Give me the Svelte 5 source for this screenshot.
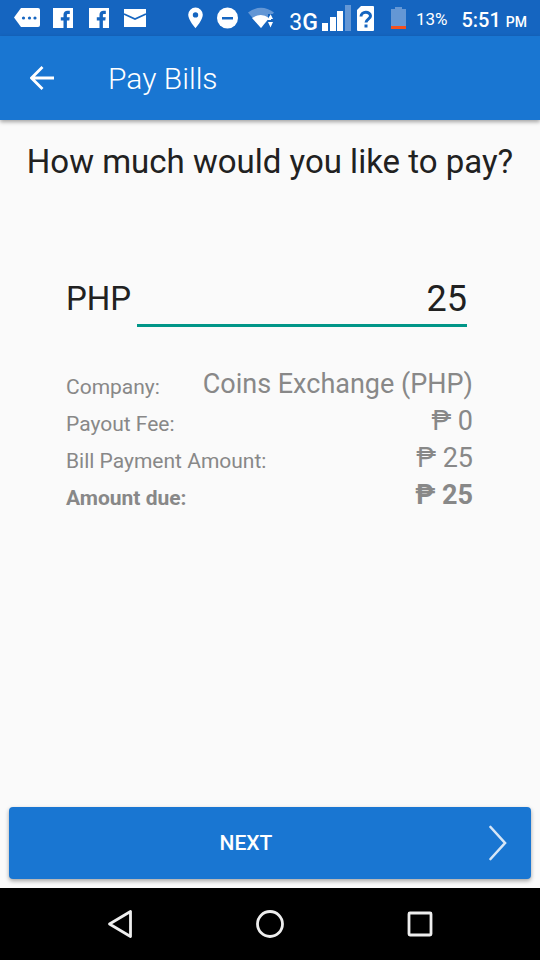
<script lang="ts">
	let amount = $state("25");

	const fee = 0;
	const total = $derived((Number(amount) || 0) + fee);

	const rows = $derived([
		{ label: "Company:", value: "Coins Exchange (PHP)", due: false },
		{ label: "Payout Fee:", value: `₱ ${fee}`, due: false },
		{ label: "Bill Payment Amount:", value: `₱ ${amount}`, due: false },
		{ label: "Amount due:", value: `₱ ${total}`, due: true },
	]);
</script>

<div class="screen">
	<div class="status">
		<div class="notifications">
			<svg viewBox="0 0 36 36" aria-hidden="true">
				<path d="M12 8h17q2 0 2 2v15q0 2-2 2H12L5 17.500z" fill="#fff" />
				<g fill="#1565c0">
					<circle cx="14.500" cy="18" r="1.600" />
					<circle cx="20.500" cy="18" r="1.600" />
					<circle cx="26" cy="18" r="1.600" />
				</g>
			</svg>
			{#each [1, 2] as id (id)}
				<svg viewBox="0 0 36 36" aria-hidden="true">
					<path d="M8 8h20v20H8z" fill="#fff" />
					<path
						d="M18.500 28v-7.500h-2.700v-3.300h2.700v-2.500c0-2.700 1.700-3.900 4-3.900h2.300v3.200h-1.600c-1 0-1.300.5-1.300 1.300v1.900h2.800l-.4 3.300h-2.400V28z"
						fill="#1565c0"
					/>
				</svg>
			{/each}
			<svg viewBox="0 0 36 36" aria-hidden="true">
				<path d="M7 9h22v18H7z" fill="#fff" />
				<path d="M7 14l11 5 11-5" fill="none" stroke="#1565c0" stroke-width="1.800" />
			</svg>
		</div>

		<div class="system">
			<div class="indicators">
				<svg viewBox="0 0 32 36" aria-hidden="true">
					<path
						fill="#fff"
						fill-rule="evenodd"
						d="M15.500 7.500a7.300 7.300 0 0 0-7.300 7.300c0 5.200 7.300 13.400 7.300 13.400s7.300-8.200 7.300-13.400a7.300 7.300 0 0 0-7.300-7.300zm0 4.700a2.700 2.700 0 1 1 0 5.400 2.700 2.700 0 0 1 0-5.400z"
					/>
				</svg>
				<svg viewBox="0 0 32 36" aria-hidden="true">
					<circle cx="15.500" cy="18" r="10.500" fill="#fff" />
					<path d="M10 17h11v2.500H10z" fill="#1565c0" />
				</svg>
				<svg viewBox="0 0 32 36" aria-hidden="true">
					<path d="M4 12.500Q17 3 30 12.500L17 28z" fill="#6497d5" />
					<path d="M8 18Q17 12 25 18L17 28z" fill="#fff" />
					<path d="M24 14h7v14h-6v-4l-1-2z" fill="#1565c0" />
					<path d="M27 14v6h-4zM24 22h5l-2.500 5.500zM27 15l2 4h-2z" fill="#fff" />
				</svg>
			</div>
			<span class="network">3<b>G</b></span>
			<svg class="signal" viewBox="0 0 29 36" aria-hidden="true">
				<path d="M0 23h6v8H0zM8 17h6v14H8zM15 11h6v20h-6z" fill="#fff" />
				<path d="M23 5h6v26h-6z" fill="#6497d5" />
			</svg>
			<svg class="sim" viewBox="0 0 17 36" aria-hidden="true">
				<path d="M4 6h12q1 0 1 1v23q0 1-1 1H1q-1 0-1-1V10z" fill="#fff" />
				<path
					d="M4 16.500c0-5.500 9.500-5.500 9.500-.5 0 3-4.500 3.300-4.500 6.500M9 24.500v3"
					fill="none"
					stroke="#1565c0"
					stroke-width="3"
				/>
			</svg>
			<svg class="battery" viewBox="0 0 15 36" aria-hidden="true">
				<path d="M4 7h7v2h4v17H0V9h4z" fill="#6497d5" />
				<path d="M0 26h15v3H0z" fill="#f4511e" />
			</svg>
			<span class="percent">13%</span>
			<span class="clock">5:51 <small>PM</small></span>
		</div>
	</div>

	<header>
		<button class="back" aria-label="Back">
			<svg viewBox="0 0 24 24" aria-hidden="true">
				<path d="M24 12H2M12.500 1L1.500 12l11 11" fill="none" stroke="#fff" stroke-width="2.800" />
			</svg>
		</button>
		<h1>Pay Bills</h1>
	</header>

	<main>
		<h2>How much would you like to pay?</h2>

		<div class="amount">
			<label for="amount">PHP</label>
			<input id="amount" type="text" inputmode="decimal" bind:value={amount} />
		</div>

		<dl>
			{#each rows as row (row.label)}
				<div class="row" class:due={row.due}>
					<dt>{row.label}</dt>
					<dd>{row.value}</dd>
				</div>
			{/each}
		</dl>

		<button class="next">
			<span>NEXT</span>
			<svg viewBox="0 0 18 36" aria-hidden="true">
				<path
					d="M1.500 2L16 18 1.500 34"
					fill="none"
					stroke="#d6e6f7"
					stroke-width="2.600"
					stroke-linecap="round"
				/>
			</svg>
		</button>
	</main>

	<nav>
		<button aria-label="Back">
			<svg viewBox="0 0 30 30" aria-hidden="true">
				<path d="M25.500 2.500v25L4.500 15z" />
			</svg>
		</button>
		<button aria-label="Home">
			<svg viewBox="0 0 30 30" aria-hidden="true">
				<circle cx="15" cy="15" r="12.500" />
			</svg>
		</button>
		<button aria-label="Recent apps">
			<svg viewBox="0 0 30 30" aria-hidden="true">
				<rect x="4" y="4" width="22" height="22" rx="1" />
			</svg>
		</button>
	</nav>
</div>

<style>
	:global(body) {
		margin: 0;
	}

	.screen {
		display: flex;
		flex-direction: column;
		min-height: 100vh;
		background: #fafafa;
		color: #212121;
		font-family: Roboto, "Liberation Sans", sans-serif;
	}

	button {
		padding: 0;
		border: 0;
		background: none;
		font-family: inherit;
		cursor: pointer;
	}

	svg {
		display: block;
		flex: none;
	}

	.status {
		display: flex;
		justify-content: space-between;
		height: 36px;
		padding: 0 13px 0 9px;
		background: #1565c0;
		color: #fff;
		line-height: 36px;
		white-space: nowrap;
	}

	.notifications,
	.indicators,
	.system {
		display: flex;
	}

	.notifications svg {
		width: 36px;
		height: 36px;
	}

	.indicators svg {
		width: 32px;
		height: 36px;
	}

	.network {
		margin-left: 13px;
		font-size: 23px;
		line-height: 45px;
	}

	.network b {
		font-weight: 500;
	}

	.signal {
		width: 29px;
		height: 36px;
		margin-left: 4px;
	}

	.sim {
		width: 17px;
		height: 36px;
		margin-left: 6px;
	}

	.battery {
		width: 15px;
		height: 36px;
		margin-left: 17px;
	}

	.percent {
		margin-left: 10px;
		font-size: 17px;
		line-height: 38px;
	}

	.clock {
		margin-left: 14px;
		font-size: 20px;
		font-weight: 500;
		line-height: 40px;
	}

	.clock small {
		font-size: 14px;
	}

	header {
		display: flex;
		align-items: center;
		height: 84px;
		background: #1976d2;
		box-shadow: 0 2px 4px rgba(0, 0, 0, 0.35);
		color: #fff;
	}

	.back {
		display: flex;
		align-items: center;
		justify-content: center;
		width: 84px;
		height: 84px;
	}

	.back svg {
		width: 24px;
		height: 24px;
	}

	h1 {
		margin: 0 0 0 24px;
		font-size: 30px;
		font-weight: 300;
	}

	main {
		display: flex;
		flex: 1;
		flex-direction: column;
	}

	h2 {
		margin: 20px 0 0;
		font-size: 33px;
		font-weight: 400;
		line-height: 44px;
		text-align: center;
	}

	.amount {
		display: flex;
		gap: 6px;
		margin: 88px 73px 0 66px;
		line-height: 54px;
	}

	.amount label {
		font-size: 33px;
	}

	.amount input {
		flex: 1;
		min-width: 0;
		height: 55px;
		box-sizing: border-box;
		padding: 1px 0 0;
		border: 0;
		border-bottom: 3px solid #009688;
		outline: 0;
		background: none;
		color: inherit;
		font-family: inherit;
		font-size: 36px;
		text-align: right;
	}

	dl {
		margin: 38px 67px 0 66px;
		color: #888;
	}

	.row {
		display: flex;
		align-items: center;
		justify-content: space-between;
		height: 37px;
	}

	.due {
		font-weight: 700;
	}

	dt {
		padding-top: 6px;
		font-size: 21px;
	}

	dd {
		margin: 0;
		font-size: 27px;
	}

	.next {
		display: flex;
		gap: 30px;
		align-items: center;
		height: 72px;
		margin: auto 9px 9px;
		padding: 0 24px;
		border-radius: 4px;
		background: #1976d2;
		box-shadow: 0 2px 4px rgba(0, 0, 0, 0.35);
		color: #fff;
		font-size: 21px;
		font-weight: 500;
	}

	.next span {
		flex: 1;
	}

	.next svg {
		width: 18px;
		height: 36px;
	}

	nav {
		display: flex;
		justify-content: center;
		height: 72px;
		background: #000;
	}

	nav button {
		display: flex;
		align-items: center;
		justify-content: center;
		width: 150px;
	}

	nav svg {
		width: 30px;
		height: 30px;
		fill: none;
		stroke: #eee;
		stroke-width: 2.8px;
		stroke-linejoin: round;
	}
</style>
